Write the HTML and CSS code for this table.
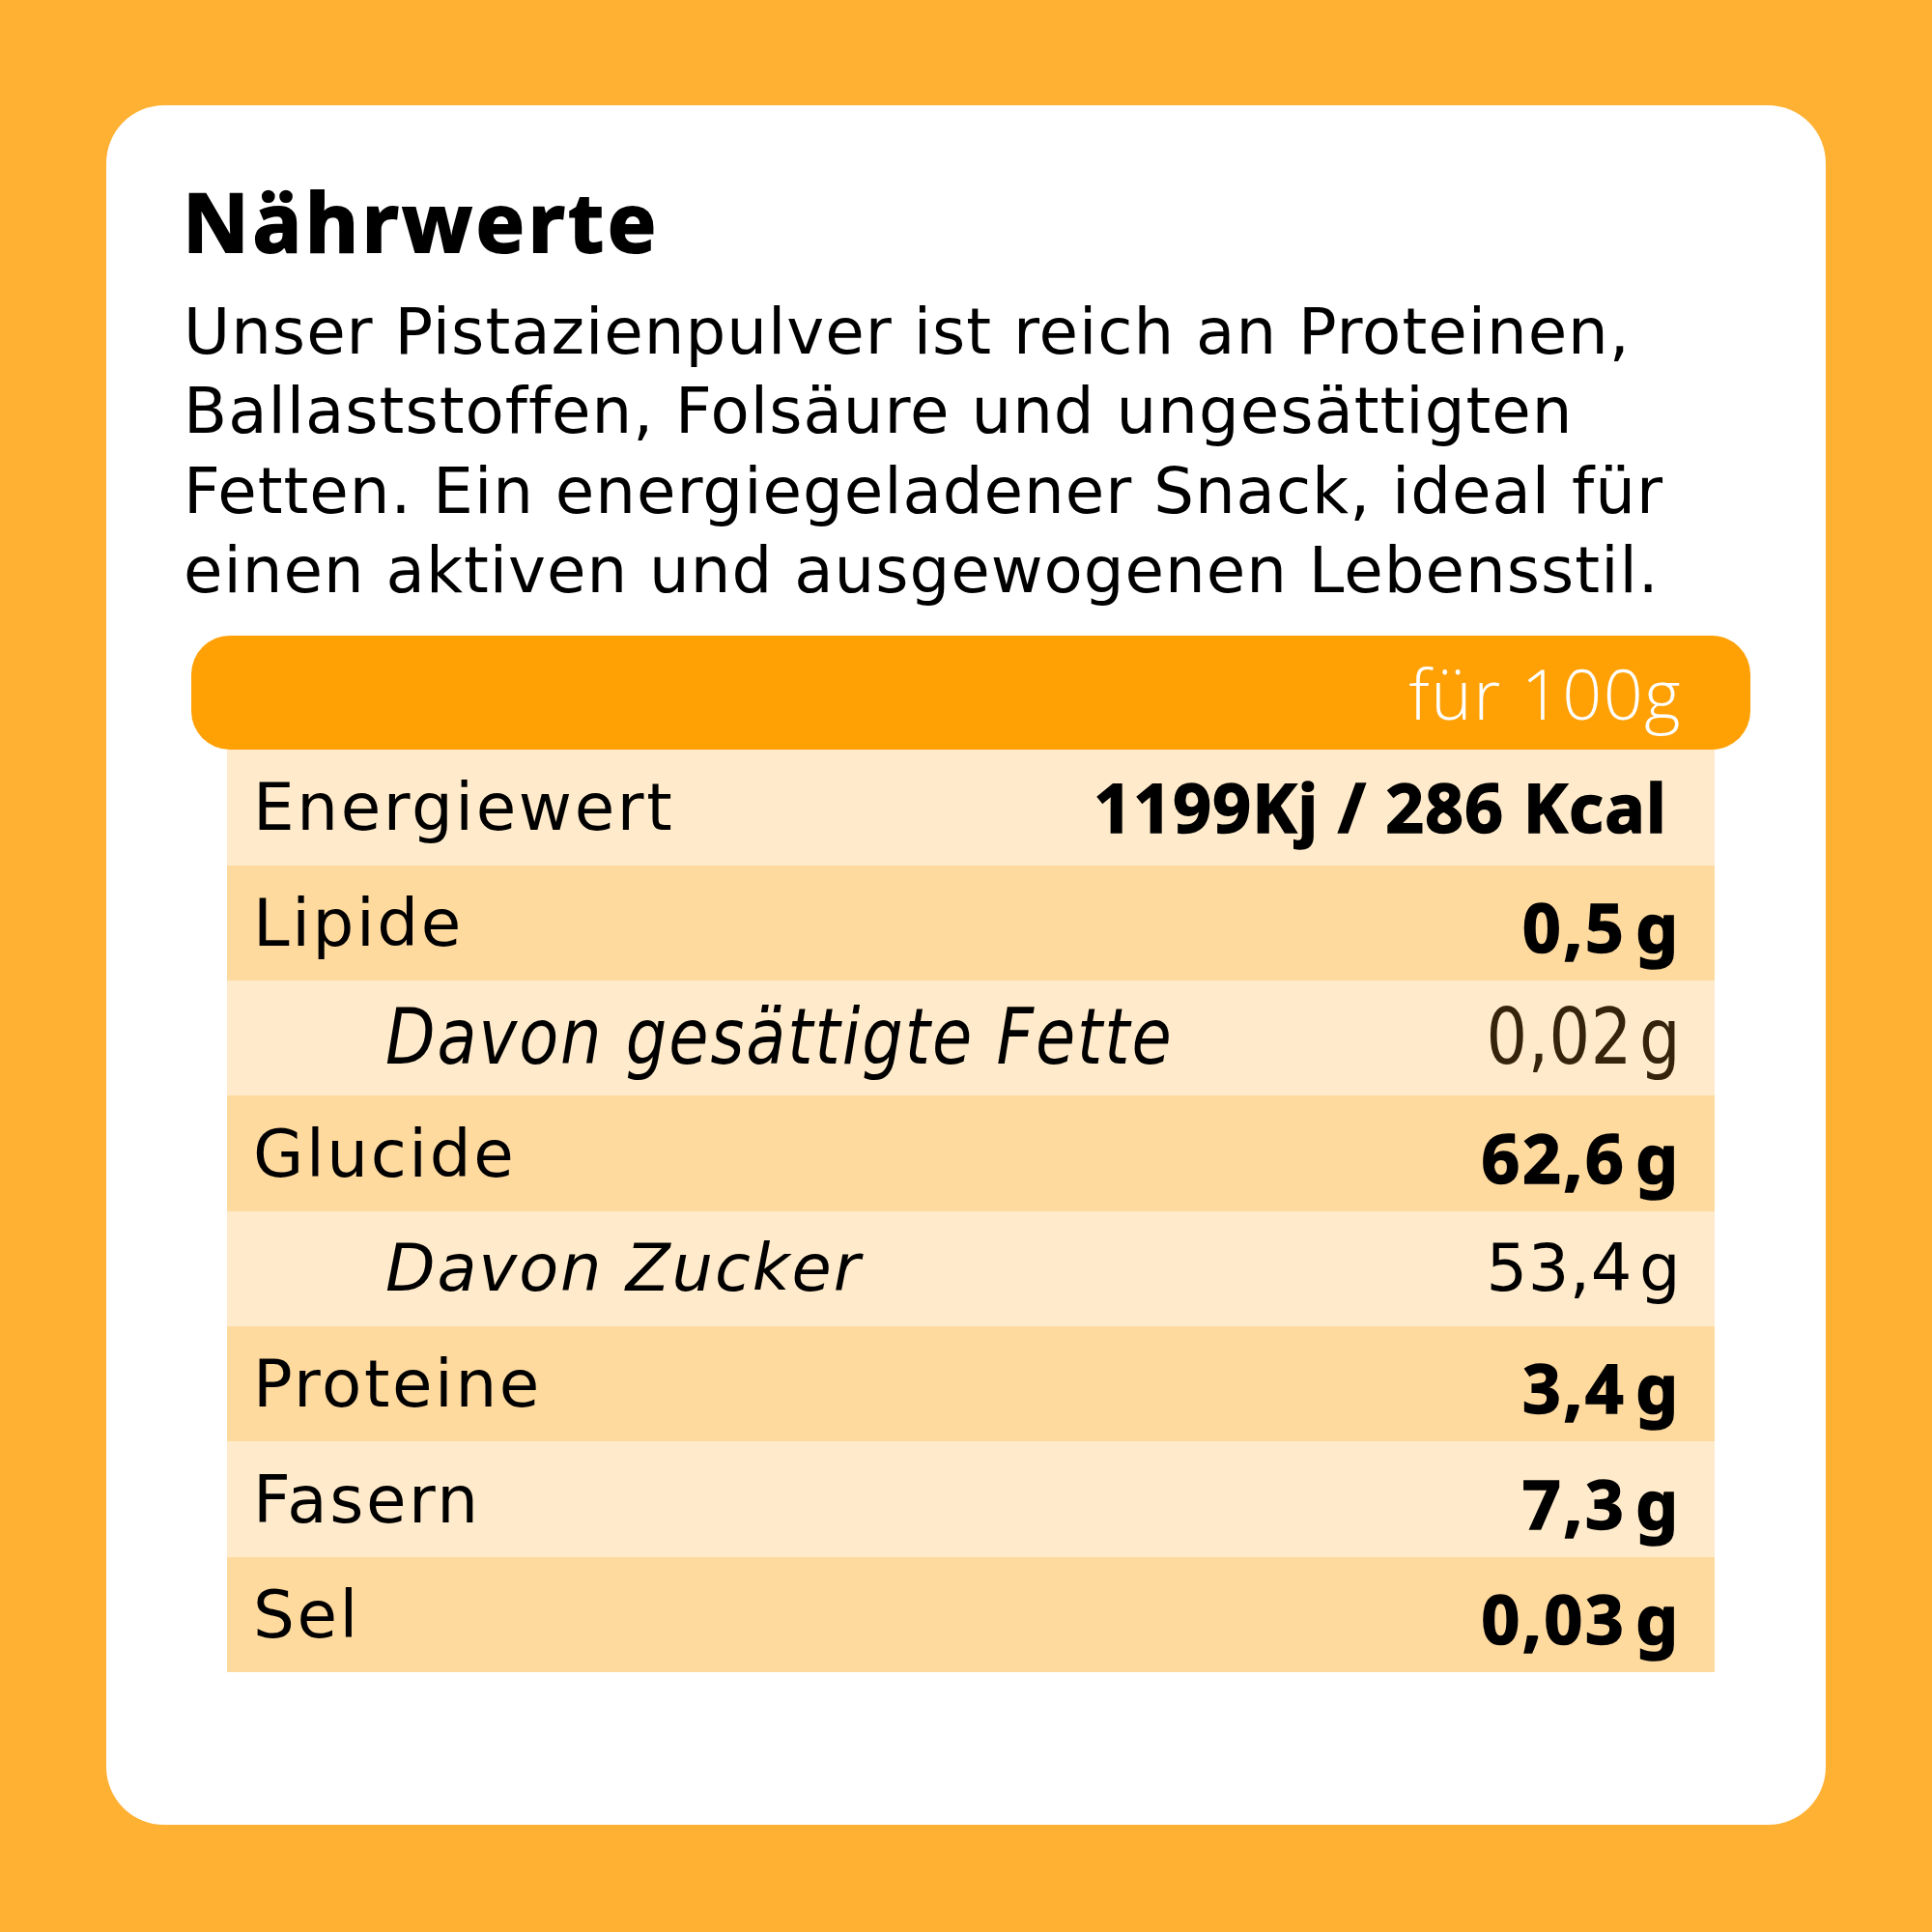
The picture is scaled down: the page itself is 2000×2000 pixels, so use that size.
FILE: index.html
```html
<!DOCTYPE html>
<html lang="de">
<head>
<meta charset="utf-8">
<title>Nährwerte</title>
<link rel="stylesheet" href="styles.css">
</head>
<body>
<main class="card">
  <h1 class="title">Nährwerte</h1>
  <p class="intro">Unser Pistazienpulver ist reich an Proteinen,<br>Ballaststoffen, Folsäure und ungesättigten<br>Fetten. Ein energiegeladener Snack, ideal für<br>einen aktiven und ausgewogenen Lebensstil.</p>
  <section class="table">
    <div class="table-head"><span class="per">für 100g</span></div>
    <div class="rows">
      <div class="row light">
        <span class="label">Energiewert</span>
        <span class="value bold kcal">1199Kj / 286 Kcal</span>
      </div>
      <div class="row dark">
        <span class="label">Lipide</span>
        <span class="value bold">0,5&#8202;g</span>
      </div>
      <div class="row light">
        <span class="label sub stretch">Davon gesättigte Fette</span>
        <span class="value regular brown stretch">0,02&#8202;g</span>
      </div>
      <div class="row dark">
        <span class="label">Glucide</span>
        <span class="value bold">62,6&#8202;g</span>
      </div>
      <div class="row light">
        <span class="label sub">Davon Zucker</span>
        <span class="value regular">53,4&#8202;g</span>
      </div>
      <div class="row dark">
        <span class="label">Proteine</span>
        <span class="value bold">3,4&#8202;g</span>
      </div>
      <div class="row light">
        <span class="label">Fasern</span>
        <span class="value bold">7,3&#8202;g</span>
      </div>
      <div class="row dark">
        <span class="label">Sel</span>
        <span class="value bold">0,03&#8202;g</span>
      </div>
    </div>
  </section>
</main>
</body>
</html>
```
FILE: styles.css
```css
html, body {
  margin: 0;
  padding: 0;
}

body {
  width: 2000px;
  height: 2000px;
  box-sizing: border-box;
  padding: 109px 110px;
  background: #ffb134;
  font-family: "DejaVu Sans", sans-serif;
  color: #000;
}

.card {
  width: 1780px;
  height: 1780px;
  box-sizing: border-box;
  background: #ffffff;
  border-radius: 60px;
  padding-top: 69px;
  display: flex;
  flex-direction: column;
}

.title {
  margin: 0 0 0 79px;
  font-family: "Noto Sans", sans-serif;
  font-weight: 700;
  font-size: 84.7px;
  line-height: 100px;
  letter-spacing: 3.7px;
  -webkit-text-stroke: 2px #000;
  height: 100px;
}

.intro {
  margin: 25px 0 0 80px;
  font-family: "DejaVu Sans", sans-serif;
  font-weight: 400;
  font-size: 65.8px;
  line-height: 82.3px;
  letter-spacing: 1px;
  white-space: nowrap;
}

.table {
  margin-top: 26px;
  display: flex;
  flex-direction: column;
}

.table-head {
  margin-left: 88px;
  width: 1614px;
  height: 118px;
  box-sizing: border-box;
  background: #ffa005;
  border-radius: 40px;
  display: flex;
  justify-content: flex-end;
  align-items: flex-start;
  padding-right: 71px;
}

.per {
  font-family: "Open Sans", sans-serif;
  font-weight: 300;
  font-size: 71.8px;
  line-height: 118px;
  letter-spacing: 1.5px;
  color: #ffffff;
}

.rows {
  margin-left: 125px;
  width: 1540px;
  display: flex;
  flex-direction: column;
}

.row {
  height: 119.375px;
  box-sizing: border-box;
  display: flex;
  justify-content: space-between;
  align-items: center;
  padding: 0 35px 0 27px;
}

.row.light {
  background: #ffebcb;
}

.row.dark {
  background: #ffda9f;
}

.label {
  font-family: "DejaVu Sans", sans-serif;
  font-weight: 400;
  font-size: 67.5px;
  line-height: 119px;
  letter-spacing: 2.6px;
  white-space: nowrap;
}

.label.sub {
  font-style: italic;
  font-size: 67px;
  letter-spacing: 1.95px;
  padding-left: 137px;
}

.value {
  font-size: 69.4px;
  line-height: 119px;
  white-space: nowrap;
  position: relative;
  top: 4px;
}

.value.bold {
  font-family: "Noto Sans", sans-serif;
  font-weight: 700;
  letter-spacing: 2.8px;
  -webkit-text-stroke: 1.6px #000;
}

.value.kcal {
  top: 0;
  margin-right: 14px;
  letter-spacing: 1.3px;
}

.value.regular {
  font-family: "DejaVu Sans", sans-serif;
  font-weight: 400;
  font-size: 67px;
  letter-spacing: 0.5px;
  top: 0;
}

.brown {
  color: #36230c;
}

.stretch {
  display: inline-block;
  transform: scaleY(1.2);
  transform-origin: 50% 50%;
}
```
